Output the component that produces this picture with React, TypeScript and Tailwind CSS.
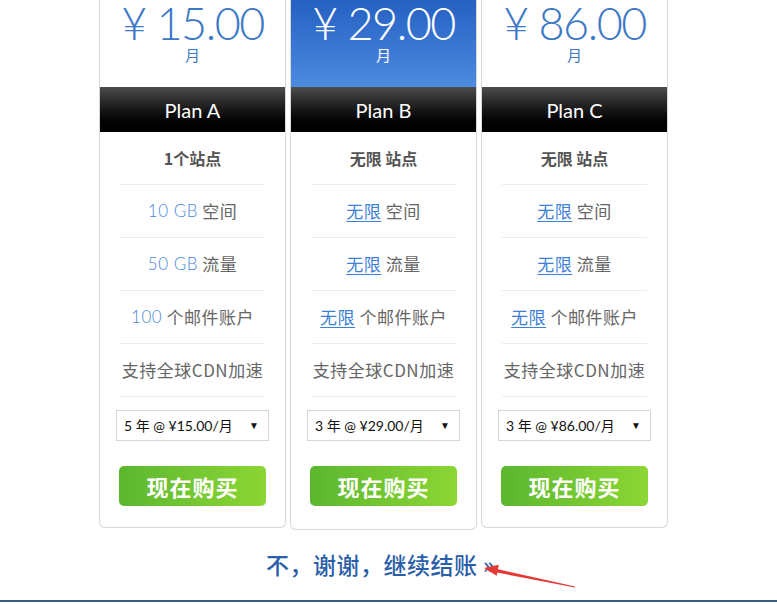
import React from "react";

type Feature = { hi?: string; link?: boolean; text: string };

type Plan = {
  price: string;
  name: string;
  sites: string;
  features: Feature[];
  option: string;
  featured?: boolean;
};

const plans: Plan[] = [
  {
    price: "15.00",
    name: "Plan A",
    sites: "1个站点",
    features: [
      { hi: "10 GB", text: " 空间" },
      { hi: "50 GB", text: " 流量" },
      { hi: "100", text: " 个邮件账户" },
      { text: "支持全球CDN加速" },
    ],
    option: "5 年 @ ¥15.00/月",
  },
  {
    price: "29.00",
    name: "Plan B",
    sites: "无限 站点",
    features: [
      { hi: "无限", link: true, text: " 空间" },
      { hi: "无限", link: true, text: " 流量" },
      { hi: "无限", link: true, text: " 个邮件账户" },
      { text: "支持全球CDN加速" },
    ],
    option: "3 年 @ ¥29.00/月",
    featured: true,
  },
  {
    price: "86.00",
    name: "Plan C",
    sites: "无限 站点",
    features: [
      { hi: "无限", link: true, text: " 空间" },
      { hi: "无限", link: true, text: " 流量" },
      { hi: "无限", link: true, text: " 个邮件账户" },
      { text: "支持全球CDN加速" },
    ],
    option: "3 年 @ ¥86.00/月",
  },
];

const latin = { fontFamily: "Lato, 'Noto Sans CJK SC', sans-serif" };
const cjk = { fontFamily: "'Noto Sans CJK SC', sans-serif" };

function PlanCard({ plan }: { plan: Plan }) {
  return (
    <div
      className={`w-[187px] rounded-b-[6px] border border-t-0 border-[#d8d8d8] bg-white ${
        plan.featured ? "pb-[23px]" : "pb-[21px]"
      }`}
    >
      {/* Price */}
      <div
        className={`flex h-[87px] flex-col items-center ${
          plan.featured
            ? "bg-gradient-to-b from-[#2560c2] to-[#4d8be0] text-white"
            : "text-[#3b78c6]"
        }`}
      >
        <div className="text-[45px] font-light leading-[46px] tracking-[-1.5px]" style={latin}>
          ¥ {plan.price}
        </div>
        <div className="text-[15px] leading-[18px]" style={cjk}>
          月
        </div>
      </div>

      {/* Name band */}
      <div
        className="flex h-[45px] items-center justify-center bg-gradient-to-b from-[#4d4d4d] to-[#000] text-[20px] font-normal text-white"
        style={latin}
      >
        {plan.name}
      </div>

      {/* Features */}
      <div className="px-[20px]">
        <div
          className="flex h-[53px] items-center justify-center border-b border-[#ececec] text-[16px] font-bold text-[#555]"
          style={cjk}
        >
          {plan.sites}
        </div>
        {plan.features.map((f, i) => (
          <div
            key={i}
            className="flex h-[53px] items-center justify-center whitespace-pre border-b border-[#ececec] text-[17px] tracking-[0.5px] text-[#666]"
            style={cjk}
          >
            {f.hi &&
              (f.link ? (
                <span className="text-[#3d7fd6] underline underline-offset-[3px]">{f.hi}</span>
              ) : (
                <span className="font-light text-[#4a88dc]" style={latin}>
                  {f.hi}
                </span>
              ))}
            <span>{f.text}</span>
          </div>
        ))}
      </div>

      {/* Term select */}
      <div className="mt-[13px] px-[16px]">
        <div className="flex h-[31px] items-center justify-between border border-[#d5d5d5] pl-[7px] pr-[9px] text-[14px] text-[#111]">
          <span style={latin}>{plan.option}</span>
          <span className="text-[10px]">▼</span>
        </div>
      </div>

      {/* Buy */}
      <div className="mt-[25px] px-[19px]">
        <div
          className="flex h-[40px] items-center justify-center rounded-[5px] bg-gradient-to-r from-[#5bb72f] to-[#8cd634] text-[22px] font-bold tracking-[1px] text-white"
          style={cjk}
        >
          现在购买
        </div>
      </div>
    </div>
  );
}

export default function App() {
  return (
    <div className="h-[604px] overflow-hidden bg-white">
      <div className="ml-[99px] flex w-[569px] items-start gap-[4px]">
        {plans.map((p) => (
          <PlanCard key={p.name} plan={p} />
        ))}
      </div>

      <div className="border-b-[2px] border-[#3c5d82] pb-[21px] pt-[19px]">
        <div className="relative ml-[99px] w-[569px]">
          <div
            className="-ml-[6px] text-center text-[23px] font-medium leading-[30px] tracking-[0.5px] text-[#2b5ea8]"
            style={cjk}
          >
            不，谢谢，继续结账 »
          </div>
          <svg
            className="absolute left-[380px] top-[9px]"
            width="100"
            height="34"
            viewBox="0 0 100 34"
          >
            <polygon points="16,10.5 96,28.5 96,29.5 15,14" fill="#e53935" />
            <polygon points="5,10 19.8,6.8 17.7,17.8" fill="#e53935" />
          </svg>
        </div>
      </div>
    </div>
  );
}
